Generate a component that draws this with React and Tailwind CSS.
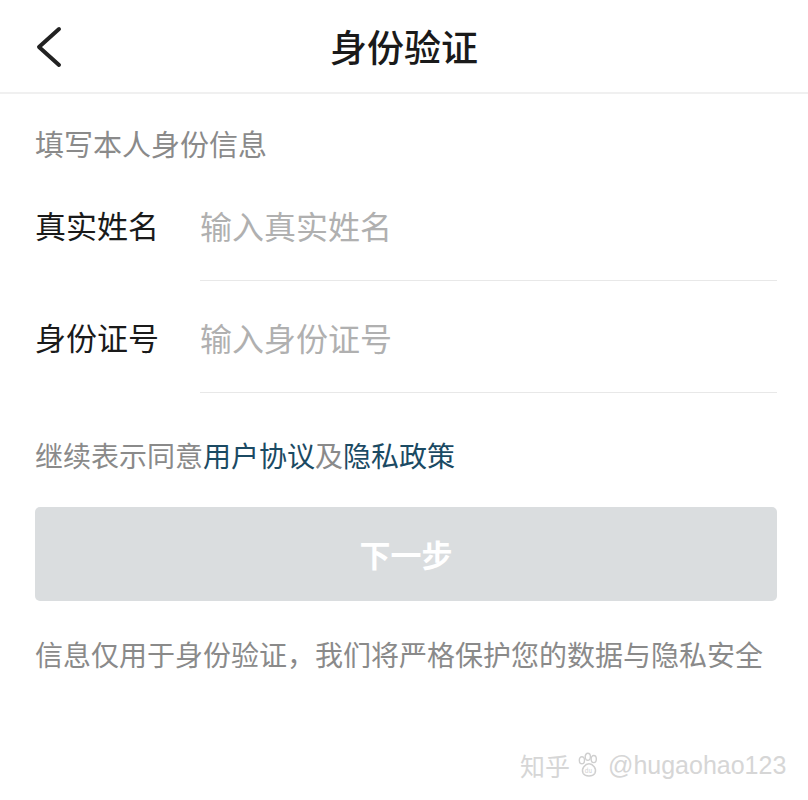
import React from "react";

const font = { fontFamily: '"Noto Sans CJK SC", "Noto Sans", sans-serif' };

function Row({ label, placeholder }) {
  return (
    <div className="flex items-center h-[112px]">
      <div className="w-[165px] shrink-0 text-[31px] leading-[40px] text-[#1a1a1a]">{label}</div>
      <div className="flex-1 h-full flex items-center border-b border-[#e8e8e8]">
        <input
          className="w-full bg-transparent outline-none text-[32px] leading-[40px] text-[#1a1a1a] placeholder:text-[#b0b0b0]"
          placeholder={placeholder}
          style={font}
        />
      </div>
    </div>
  );
}

export default function App() {
  return (
    <div className="relative w-[808px] min-h-[800px] bg-white" style={font}>
      <header className="relative flex items-center justify-center h-[94px] border-b-2 border-[#f0f0f0]">
        <button className="absolute left-[30px] top-[22px] w-[40px] h-[50px] flex items-center justify-center">
          <svg width="40" height="50" viewBox="0 0 40 50" fill="none">
            <path d="M29 7 L9 25 L29 43" stroke="#222" strokeWidth="4" strokeLinecap="round" strokeLinejoin="round" />
          </svg>
        </button>
        <h1 className="text-[37px] leading-[44px] text-[#1a1a1a] font-medium">身份验证</h1>
      </header>

      <main className="pl-[35px] pr-[31px]">
        <div className="mt-[29px] text-[29px] leading-[40px] text-[#8a8a8a]">填写本人身份信息</div>
        <div className="mt-[6px]">
          <Row label="真实姓名" placeholder="输入真实姓名" />
          <Row label="身份证号" placeholder="输入身份证号" />
        </div>

        <p className="mt-[42px] text-[28px] leading-[40px] text-[#8a8a8a]">
          继续表示同意<span className="text-[#1b4a63]">用户协议</span>及<span className="text-[#1b4a63]">隐私政策</span>
        </p>

        <button className="mt-[32px] w-full h-[94px] rounded-[5px] bg-[#dadddf] text-white text-[31px] font-bold flex items-center justify-center">
          下一步
        </button>

        <p className="mt-[33px] text-[28px] leading-[40px] text-[#8a8a8a] whitespace-nowrap">
          信息仅用于身份验证，我们将严格保护您的数据与隐私安全
        </p>
      </main>

      <div className="absolute left-[520px] top-[750px] flex items-center gap-[6px] text-[25px] leading-[30px] text-[#d6d6d6]">
        <span>知乎</span>
        <svg width="26" height="26" viewBox="0 0 22 22" fill="none" stroke="#cfcfcf" strokeWidth="1.2">
          <ellipse cx="5" cy="7" rx="2.2" ry="3" />
          <ellipse cx="10" cy="4" rx="2.2" ry="3" />
          <ellipse cx="15" cy="6" rx="2.2" ry="3" />
          <path d="M6 18 C4 14 8 10 11 10 C14 10 18 14 16 18 C14 21 8 21 6 18 Z" />
          <text x="7.5" y="18" fontSize="5" fill="#cfcfcf" stroke="none">du</text>
        </svg>
        <span style={{ fontFamily: '"Liberation Sans", sans-serif' }}>@hugaohao123</span>
      </div>
    </div>
  );
}
